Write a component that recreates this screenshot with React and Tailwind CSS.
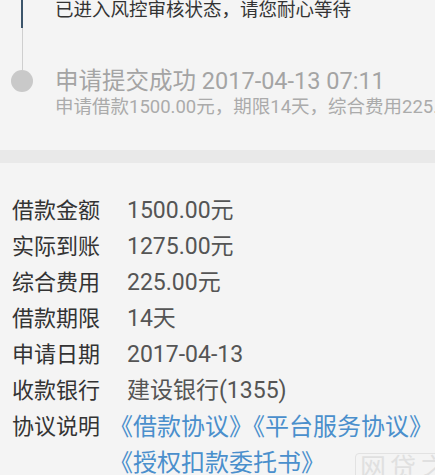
const rows = [
  ['借款金额', '1500.00元'],
  ['实际到账', '1275.00元'],
  ['综合费用', '225.00元'],
  ['借款期限', '14天'],
  ['申请日期', '2017-04-13'],
  ['收款银行', '建设银行(1355)'],
];

const font = { fontFamily: 'Roboto, "Noto Sans CJK SC", sans-serif' };

export default function App() {
  return (
    <div className="relative h-[475px] w-[435px] overflow-hidden bg-[#f4f4f4]" style={font}>
      {/* Timeline */}
      <div className="flex h-[70px]">
        <div className="flex w-[44px] shrink-0 flex-col items-center">
          <div className="h-[28px] w-[2px] bg-[#3c556b]" />
          <div className="w-[1px] flex-1 bg-[#cfcfcf]" />
        </div>
        <div className="-mt-[2px] pl-[11px] text-[18.5px] leading-[24px] text-[#333]">
          已进入风控审核状态，请您耐心等待
        </div>
      </div>
      <div className="flex">
        <div className="flex w-[44px] shrink-0 justify-center">
          <div className="h-[22px] w-[22px] rounded-full bg-[#c9c9c9]" />
        </div>
        <div className="min-w-0 flex-1 pl-[11px]">
          <div className="whitespace-nowrap text-[23.5px] leading-[22px] text-[#a4a4a4]">
            申请提交成功 2017-04-13 07:11
          </div>
          <div className="mt-[3px] overflow-hidden whitespace-nowrap text-[18.5px] leading-[24px] text-[#ababab]">
            申请借款1500.00元，期限14天，综合费用225.00元
          </div>
        </div>
      </div>

      {/* Separator */}
      <div className="mt-[31px] h-[13px] bg-[#e9e9e9]" />

      {/* Details */}
      <div className="pt-[30px] leading-[36px]">
        {rows.map(([label, value]) => (
          <div key={label} className="flex">
            <div className="w-[127px] shrink-0 pl-[12px] text-[22px] text-[#333]">{label}</div>
            <div className="text-[23px] text-[#555]">{value}</div>
          </div>
        ))}
        <div className="flex">
          <div className="w-[127px] shrink-0 pl-[12px] text-[22px] text-[#333]">协议说明</div>
          <div className="-ml-[18px] text-[24px] text-[#4a8fcc]">
            <div className="whitespace-nowrap">《借款协议》《平台服务协议》</div>
            <div className="whitespace-nowrap">《授权扣款委托书》</div>
          </div>
        </div>
      </div>

      {/* Watermark */}
      <div className="absolute bottom-[-8px] left-[355px] select-none whitespace-nowrap rounded-sm border border-[#e2e2e2] px-1 text-[26px] leading-[28px] tracking-[4px] text-[#e0e0e0]">
        网贷之家
      </div>
    </div>
  );
}
